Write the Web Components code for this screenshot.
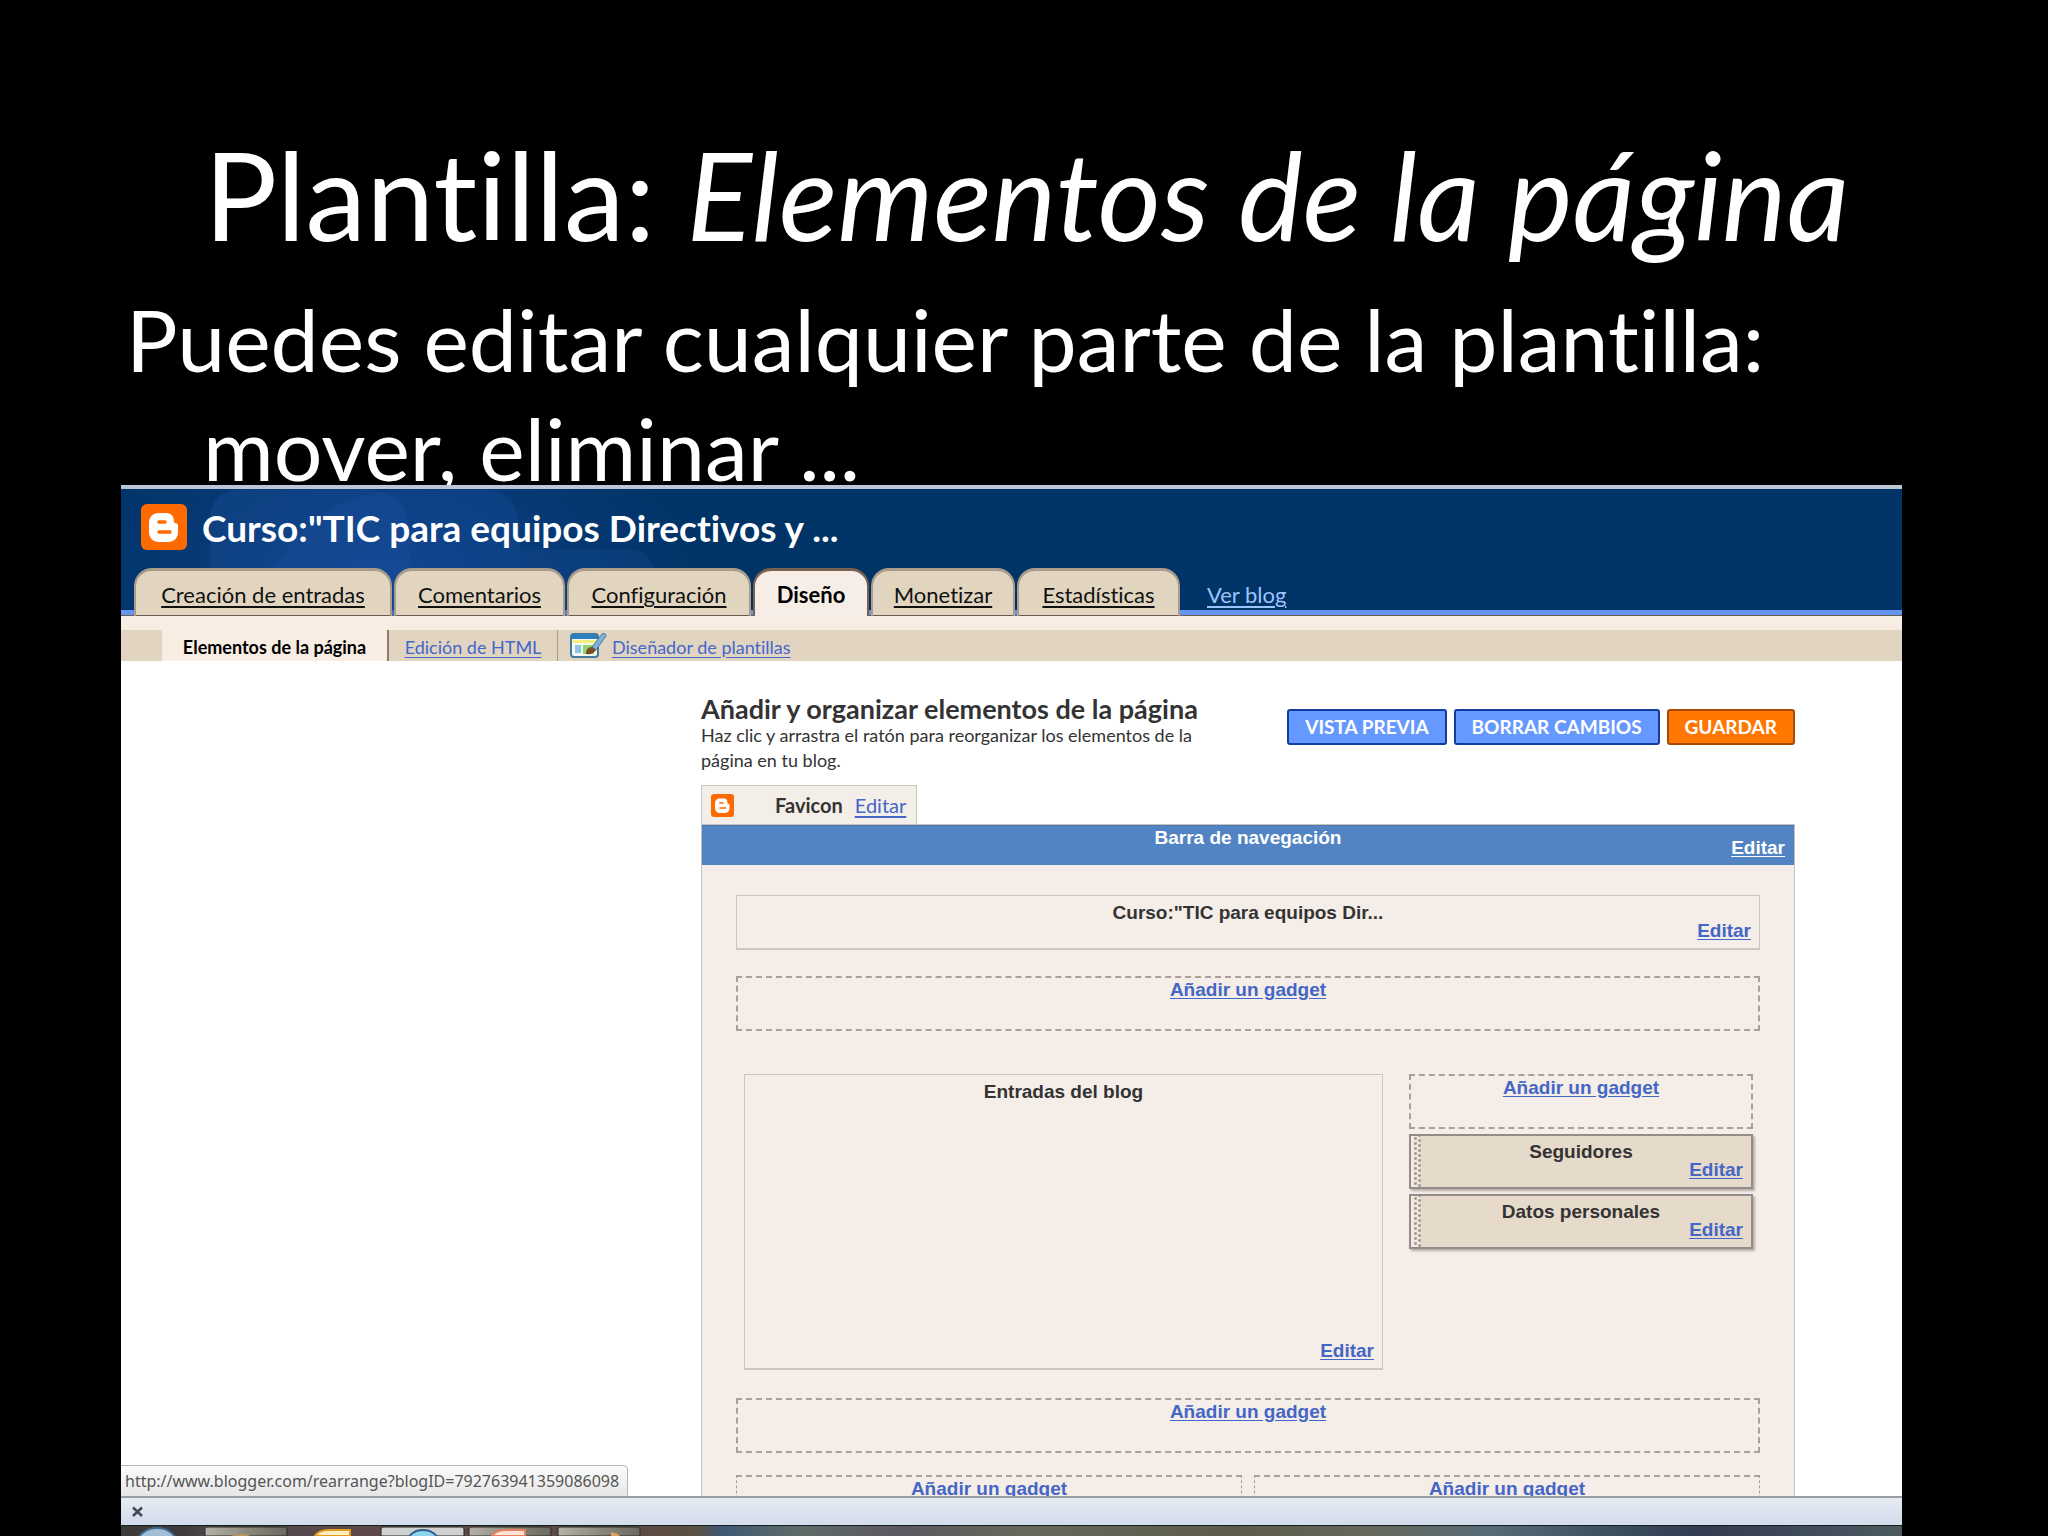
<!DOCTYPE html>
<html lang="es">
<head>
<meta charset="utf-8">
<title>Plantilla: Elementos de la página</title>
<style>
html, body { margin: 0; height: 100%; background: #000; overflow: hidden; }
body { font-family: Lato, "Open Sans", sans-serif; font-variant-ligatures: none; color: #333; }
slide-page { height: 100%; }
</style>
</head>
<body>
<slide-page>
  <span slot="title">Plantilla: <em>Elementos de la página</em></span>
  <span slot="text">Puedes editar cualquier parte de la plantilla: mover, eliminar ...</span>
  <browser-shot>
    <blog-header heading='Curso:"TIC para equipos Directivos y ...'></blog-header>
    <sub-nav></sub-nav>
    <layout-editor></layout-editor>
  </browser-shot>
</slide-page>
<script>
const define = (name, markup) => {
  const template = document.createElement('template');
  customElements.define(name, class extends HTMLElement {
    constructor() {
      super();
      template.innerHTML = typeof markup === 'function' ? markup(this) : markup;
      this.attachShadow({ mode: 'open' }).append(template.content.cloneNode(true));
    }
  });
};

define('slide-page', `
<style>
:host { display: flex; flex-direction: column; box-sizing: border-box; padding: 128px 146px 0 121px; color: #fff; }
h1 { margin: 0; padding-left: 30px; font-size: 122px; line-height: 132px; font-weight: 400; text-align: center; white-space: nowrap; }
p { margin: 24px 0 0; padding: 0 0 0 82px; text-indent: -77px; font-size: 86px; line-height: 109px; height: 201px; }
::slotted(browser-shot) { flex: 1; min-height: 0; }
</style>
<h1><slot name="title"></slot></h1>
<p><slot name="text"></slot></p>
<slot></slot>`);

define('browser-shot', `
<style>
:host { display: flex; flex-direction: column; background: #fff; color: #333; border-top: 4px solid #b9c7d4; position: relative; }
main { flex: 1; min-height: 0; overflow: hidden; position: relative; }
.status { position: absolute; left: 0; bottom: 0; box-sizing: border-box; height: 31px; padding: 0 8px 0 4px; border: 1px solid #b5b5b5; border-width: 1px 1px 0 0; border-radius: 0 5px 0 0; background: linear-gradient(#fbfbfb, #e6e6e6); font: 16px/30px "Noto Sans", sans-serif; color: #555; }
</style>
<main><slot></slot><div class="status">http://www.blogger.com/rearrange?blogID=792763941359086098</div></main>
<find-bar></find-bar>
<task-bar></task-bar>`);

define('find-bar', `
<style>
:host { display: flex; align-items: center; box-sizing: border-box; height: 29px; padding: 0 10px; border-top: 2px solid #9a9fa6; background: linear-gradient(#e6ebf3, #d3dceb); }
button { border: 0; padding: 0; background: none; display: flex; }
</style>
<button aria-label="Cerrar"><svg width="13" height="12" viewBox="0 0 13 12"><path d="M2 1.5l9 8.5M11 1.500L2 10" stroke="#444a55" stroke-width="2.5"/></svg></button>`);

define('task-bar', `
<style>
:host { display: block; height: 11px; flex: none; border-top: 1px solid #16201f; box-sizing: border-box; overflow: hidden;
 background: linear-gradient(90deg, #3c3a3a 0 60px, #4c4648 90px, #5d484c 240px, #5c4a44 515px, #5a5040 575px, #3e5872 600px, #5d6c68 680px, #5b5760 780px, #66685a 900px, #5c5b4b 1120px, #66685c 1250px, #566b76 1370px, #3a4d5d 1500px, #313c50 1580px, #4c5a61 100%); }
svg { display: block; }
</style>
<svg width="530" height="10" viewBox="0 0 530 10">
<defs><linearGradient id="g"><stop stop-color="#b4b1a8"/><stop offset=".5" stop-color="#8c897c"/><stop offset="1" stop-color="#6b6a60"/></linearGradient></defs>
<ellipse cx="36" cy="18" rx="20" ry="16" fill="#a4bdd6" stroke="#3f6b90" stroke-width="2"/>
<path d="M84 10V3q0-2 2-2h78q2 0 2 2v7z" fill="url(#g)" stroke="#2a2a2a"/>
<path d="M109 10q10-3 20-1l-2 1z" fill="#b89a50"/>
<path d="M194 10q4-6 14-6h21v6z" fill="#ffeec0" stroke="#e69a1a" stroke-width="2"/>
<path d="M260 10V3q0-2 2-2h79q2 0 2 2v7z" fill="#cfd1d0" stroke="#222"/>
<ellipse cx="302" cy="15" rx="15" ry="11" fill="#8fd4ee" stroke="#2a608c" stroke-width="2"/>
<path d="M348 10V3q0-2 2-2h78q2 0 2 2v7z" fill="url(#g)" stroke="#2a2a2a"/>
<path d="M371 10q4-6 14-6h19v6z" fill="#fde4d4" stroke="#e8805c" stroke-width="2"/>
<path d="M437 10V3q0-2 2-2h78q2 0 2 2v7z" fill="url(#g)" stroke="#2a2a2a"/>
<path d="M490 10v-4q7 1 9 4z" fill="#dda060"/>
</svg>`);

define('blogger-logo', `
<style>:host { display: block; } svg { display: block; width: 100%; height: 100%; }</style>
<svg viewBox="0 0 46 46" aria-hidden="true"><rect width="46" height="46" rx="6" fill="#ff6a00"/>
<path d="M18 9h7c6 0 8 4 8 9 0 2 4 0 4 4v6c0 6-4 10-10 10H18c-6 0-10-4-10-10V19c0-6 4-10 10-10z" fill="#fff"/>
<path d="M18 18h6M18 28h11" stroke="#ff6a00" stroke-width="3.4" stroke-linecap="round"/></svg>`);

define('blog-header', el => `
<style>
:host { display: flex; flex-direction: column; color: #fff; box-sizing: border-box; height: 127px; padding-left: 13px;
 border-bottom: 1px solid #6b5b55;
 background:
  linear-gradient(#6496ee, #6496ee) 0 100% / 100% 5px no-repeat,
  radial-gradient(ellipse 330px 200px at 260px 90px, rgba(30,80,170,.5), transparent) no-repeat,
  #003366; position: relative; }
.deco { position: absolute; left: 80px; top: 0; }
header { display: flex; align-items: center; gap: 15px; height: 79px; padding: 0 7px; box-sizing: border-box; position: relative; }
blogger-logo { width: 46px; height: 46px; margin-top: -4px; }
h2 { margin: 0; font-size: 37px; line-height: 38px; margin-top: -2px; font-weight: 700; }
nav { display: grid; grid-template-columns: 258px 171px 184px 116px 144px 163px auto; justify-content: start; gap: 2px; flex: 1; position: relative; margin-bottom: -1px; }
a { box-sizing: border-box; font-size: 22px; line-height: 48px; color: #111; text-align: center; text-underline-offset: 3px; border: 2px solid #a99c8b; border-width: 3px 2px 0; border-radius: 18px 18px 0 0; background: #e2d5c0; box-shadow: inset 0 -1px #6b5b55; height: 48px; }
a.on { background: #f6ede6; border-color: #77604f; font-weight: 700; text-decoration: none; box-shadow: none; color: #000; }
a.view { background: none; border-color: transparent; color: #9cc4ff; box-shadow: none; padding-left: 23px; }
</style>
<svg class="deco" width="480" height="126" viewBox="0 0 480 126" aria-hidden="true"><path d="M9 126V30Q9 0 45 0H170Q208 4 208 45V126z" fill="#1d4f9c" opacity=".35"/><path d="M50 126Q80 50 130 20 160 0 220 0H285Q319 4 319 45V126z" fill="#1d55a8" opacity=".25"/><path d="M319 126V60H430Q456 64 456 100V126z" fill="#1d4f9c" opacity=".25"/></svg>
<header><blogger-logo></blogger-logo><h2>${el.getAttribute('heading')}</h2></header>
<nav><a href="#">Creación de entradas</a><a href="#">Comentarios</a><a href="#">Configuración</a><a href="#" class="on">Diseño</a><a href="#">Monetizar</a><a href="#">Estadísticas</a><a href="#" class="view">Ver blog</a></nav>`);

define('sub-nav', `
<style>
:host { display: block; padding-top: 14px; background: #f7ede3; font-size: 18px; }
nav { display: grid; grid-template: 31px / 227px 169px auto; justify-content: start; background: #e1d5c1; padding-left: 41px; line-height: 34px; }
b { background: #f7ede3; color: #000; text-align: center; border-right: 2px solid #8a7c6c; }
a { color: #4467cc; text-underline-offset: 3px; }
.item { display: flex; align-items: center; justify-content: center; border-right: 1px solid #a89b8a; }
.item a { padding-top: 2px; }
.last { padding: 0 12px; border: 0; gap: 5px; }
</style>
<nav><b>Elementos de la página</b><span class="item"><a href="#">Edición de HTML</a></span>
<span class="item last"><svg width="37" height="25" viewBox="0 0 37 25" aria-hidden="true"><rect x="1" y="1" width="27" height="23" rx="3" fill="#f4f8ee" stroke="#45799c" stroke-width="2"/><path d="M1 6V3q0-2 2-2h24v5z" fill="#2f7fc0"/><path d="M3 7h23v3H3z" fill="#f3ee7d"/><path d="M5 12h6v8H5z" fill="#91c3e6"/><path d="M13 12h11v9H13z" fill="#8fd86a"/><path d="M22 14L32 1q4-2 4 2L26 17z" fill="#7db4de" stroke="#4f7896"/><path d="M16 19q1-5 6-5l4 3q-3 5-10 4z" fill="#7d4a22"/></svg><a href="#">Diseñador de plantillas</a></span></nav>`);

define('edit-gadget', el => `
<style>
:host { display: flex; flex-direction: column; box-sizing: border-box; height: 55px; padding: 5px 8px; border: 1px solid #cdc5be; border-bottom-width: 2px; font: 700 19px/24px "Liberation Sans", sans-serif; color: #333; text-align: center; }
:host([bar]) { height: 40px; background: #5284c3; border-width: 1px 0 0; border-color: #4e78ae; color: #fff; padding: 0 9px 4px; }
:host([movable]) { border: 2px solid #958a8b; box-shadow: 2px 2px 2px #b9adab; padding: 4px 8px; background: radial-gradient(circle, #a99c96 1px, transparent 2px) 2px 0 / 5px 5px repeat-y, radial-gradient(circle, #a99c96 1px, transparent 2px) 6px 2px / 5px 5px repeat-y, linear-gradient(90deg, #f2e9e2 9px, #e6dacb 9px); }
:host([tall]) { height: 296px; }
a { align-self: flex-end; color: #4466c6; margin-top: -6px; text-underline-offset: 2px; }
:host([bar]) a { color: #fff; margin-top: -14px; }
:host([tall]) a { margin-top: auto; }
</style>
<span>${el.getAttribute('label')}</span><a href="#">Editar</a>`);

define('add-gadget', `
<style>
:host { display: block; box-sizing: border-box; height: 55px; border: 2px dashed #aaa09b; text-align: center; font: 700 19px/24px "Liberation Sans", sans-serif; }
a { color: #4466c6; text-underline-offset: 2px; }
</style>
<a href="#">Añadir un gadget</a>`);

define('action-button', `
<style>
:host { display: block; }
button { box-sizing: border-box; height: 36px; padding: 0 16px 1px; border: 2px solid #143c9c; border-radius: 3px; background: #6699ff; color: #fff; font: 700 19px/31px Lato, sans-serif; }
:host([primary]) button { background: #ff7700; border-color: #a84a06; }
</style>
<button><slot></slot></button>`);

define('layout-editor', `
<style>
:host { display: block; box-sizing: border-box; padding: 34px 107px 0 580px; color: #333; }
.top { display: flex; justify-content: space-between; height: 90px; }
h3 { margin: 0; font-size: 27px; line-height: 28px; }
p { margin: 0; font-size: 18px; line-height: 25px; max-width: 515px; }
.actions { display: flex; gap: 7px; padding-top: 14px; }
.fav { display: flex; align-items: center; width: max-content; height: 39px; box-sizing: border-box; border: 1px solid #c9c4c0; border-bottom: 0; padding: 0 10px 0 9px; background: #f3eee7; font-size: 20px; line-height: 24px; }
.fav blogger-logo { width: 23px; height: 23px; margin-right: 41px; }
.fav b { margin-right: 12px; }
.fav a { color: #4466c6; text-underline-offset: 3px; }
.panel { background: #f5ede7; border: 1px solid #c5c3c0; height: 720px; }
.body { display: flex; flex-direction: column; padding: 30px 34px; }
.body > add-gadget { margin-top: 26px; }
.cols { display: grid; grid-template-columns: 639fr 344fr; align-items: start; gap: 26px; padding: 0 7px 0 8px; margin: 43px 0 2px; }
.side { display: flex; flex-direction: column; gap: 5px; }
.foot { display: flex; gap: 12px; margin-top: 22px; }
.foot add-gadget { flex: 1; border-width: 2px 1px; }
</style>
<div class="top"><div><h3>Añadir y organizar elementos de la página</h3><p>Haz clic y arrastra el ratón para reorganizar los elementos de la página en tu blog.</p></div>
<div class="actions"><action-button>VISTA PREVIA</action-button><action-button>BORRAR CAMBIOS</action-button><action-button primary>GUARDAR</action-button></div></div>
<div class="fav"><blogger-logo></blogger-logo><b>Favicon</b><a href="#">Editar</a></div>
<div class="panel"><edit-gadget bar label="Barra de navegación"></edit-gadget>
<div class="body">
<edit-gadget label='Curso:"TIC para equipos Dir...'></edit-gadget>
<add-gadget></add-gadget>
<div class="cols"><edit-gadget tall label="Entradas del blog"></edit-gadget>
<div class="side"><add-gadget></add-gadget><edit-gadget movable label="Seguidores"></edit-gadget><edit-gadget movable label="Datos personales"></edit-gadget></div></div>
<add-gadget></add-gadget>
<div class="foot"><add-gadget></add-gadget><add-gadget></add-gadget></div>
</div></div>`);
</script>
</body>
</html>
